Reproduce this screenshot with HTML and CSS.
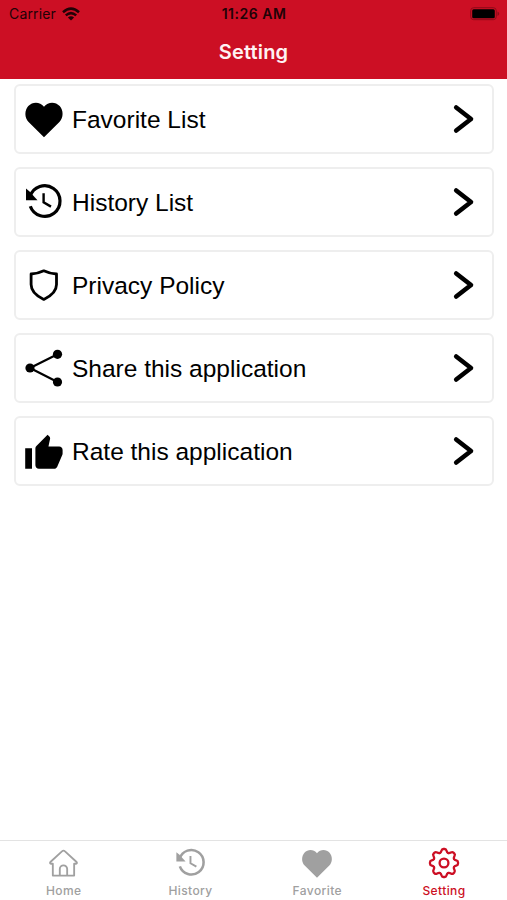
FILE: index.html
```html
<!DOCTYPE html>
<html lang="en">
<head>
<meta charset="utf-8">
<title>Setting</title>
<link rel="stylesheet" href="styles.css">
</head>
<body>
<svg class="defs" aria-hidden="true">
  <symbol id="heart" viewBox="0 0 40 40"><path fill="currentColor" d="M20 38.3L4.6 23.1C.4 18.700.4 11.500 4.300 7.100C8.600 2.500 15.800 2.500 20 7.800C24.200 2.500 31.400 2.500 35.700 7.100C39.600 11.500 39.600 18.700 35.400 23.100Z"/></symbol>
  <symbol id="history" viewBox="0 0 40 40">
    <path fill="none" stroke="currentColor" stroke-width="3.200" d="M6.100 14.500A15.300 15.300 0 1 1 6.300 24.200"/>
    <path fill="none" stroke="currentColor" stroke-width="2.400" d="M19.600 11.300V20.300L27 24.600"/>
    <path fill="currentColor" d="M2 6.600L5.500 9.500L13.500 18.200H2Z"/>
  </symbol>
  <symbol id="chevron" viewBox="0 0 24 32"><path fill="none" stroke="currentColor" stroke-width="4.600" stroke-linecap="round" stroke-linejoin="round" d="M5.200 4.500L20 16L5.200 27.500"/></symbol>
</svg>
<header class="header">
  <div class="status">
    <div class="carrier"><span>Carrier</span>
      <svg class="wifi" viewBox="0 0 18 14"><g fill="none" stroke="currentColor" stroke-width="2.500"><path d="M1 5.200Q9-2 17 5.200"/><path d="M3.800 8.400Q9 3.900 14.200 8.400"/></g><path fill="currentColor" d="M5.900 10.500Q9 7.900 12.100 10.500L9 13.600Z"/></svg>
    </div>
    <span class="time">11:26 AM</span>
    <svg class="battery" viewBox="0 0 30 14"><rect x=".7" y=".7" width="25.600" height="12" rx="3" fill="none" stroke="#8e0b19" stroke-width="1"/><rect x="2.200" y="2.200" width="22.600" height="9" rx="1.500" fill="#000"/><path fill="#8e0b19" d="M27.500 4.500Q31 6.700 27.500 9Z"/></svg>
  </div>
  <h1 class="title">Setting</h1>
</header>
<main class="list">
  <a class="row"><svg class="icon"><use href="#heart"/></svg><span class="label">Favorite List</span><svg class="chevron"><use href="#chevron"/></svg></a>
  <a class="row"><svg class="icon"><use href="#history"/></svg><span class="label">History List</span><svg class="chevron"><use href="#chevron"/></svg></a>
  <a class="row"><svg class="icon" viewBox="0 0 40 40"><path fill="none" stroke="#000" stroke-width="2.800" stroke-linejoin="round" d="M19.800 5.800Q26 8.800 32.500 9V19.500Q32.500 28.500 19.800 34.400Q7.100 28.500 7.100 19.500V9Q13.600 8.800 19.800 5.800Z"/></svg><span class="label">Privacy Policy</span><svg class="chevron"><use href="#chevron"/></svg></a>
  <a class="row"><svg class="icon" viewBox="0 0 40 40"><path fill="none" stroke="#000" stroke-width="2.200" d="M33.500 6.300L6 20L33.500 34"/><circle cx="33.500" cy="6.300" r="4.600"/><circle cx="6" cy="20" r="4.600"/><circle cx="33.500" cy="34" r="4.600"/></svg><span class="label">Share this application</span><svg class="chevron"><use href="#chevron"/></svg></a>
  <a class="row"><svg class="icon" viewBox="0 0 40 40"><path transform="translate(-.5 2) scale(1.7)" d="M1 21h4V9H1v12zm22-11c0-1.100-.9-2-2-2h-6.310l.95-4.570.03-.32c0-.41-.17-.79-.44-1.060L14.170 1 7.590 7.590C7.220 7.950 7 8.450 7 9v10c0 1.100.9 2 2 2h9c.83 0 1.540-.5 1.840-1.220l3.020-7.050c.09-.23.14-.47.14-.73v-2z"/></svg><span class="label">Rate this application</span><svg class="chevron"><use href="#chevron"/></svg></a>
</main>
<nav class="tabs">
  <a class="tab"><svg class="tab-icon" viewBox="-1 -.5 33 33"><g fill="none" stroke="currentColor" stroke-width="1.900" stroke-linejoin="round"><path d="M16 3.200Q16.700 3.200 17.300 3.800L29.500 15Q30.500 16.500 28.800 16.800H27V29H5V16.800H3.200Q1.500 16.500 2.500 15L14.700 3.800Q15.300 3.200 16 3.200Z"/><path d="M12.200 29V22.200A3.800 3.800 0 0 1 19.800 22.200V29"/></g></svg><span>Home</span></a>
  <a class="tab"><svg class="tab-icon" viewBox="-.8 0 32 32"><use href="#history" width="32" height="32"/></svg><span>History</span></a>
  <a class="tab"><svg class="tab-icon"><use href="#heart"/></svg><span>Favorite</span></a>
  <a class="tab active"><svg class="tab-icon" viewBox="-16 -16 32 32"><g fill="none" stroke="currentColor" stroke-width="2.300" stroke-linecap="round">
    <path id="tooth" d="M-4.130-9.980C-1.700-11-3.400-14-.7-14H.7C3.400-14 1.700-11 4.130-9.980"/>
    <use href="#tooth" transform="rotate(45)"/><use href="#tooth" transform="rotate(90)"/><use href="#tooth" transform="rotate(135)"/><use href="#tooth" transform="rotate(180)"/><use href="#tooth" transform="rotate(225)"/><use href="#tooth" transform="rotate(270)"/><use href="#tooth" transform="rotate(315)"/>
    <circle r="4.400"/></g></svg><span>Setting</span></a>
</nav>
</body>
</html>
```
FILE: styles.css
```css
* { box-sizing: border-box; }
body {
  margin: 0;
  height: 900px;
  display: flex;
  flex-direction: column;
  overflow: hidden;
  background: #fff;
  color: #000;
  font-family: Inter, sans-serif;
}
.defs { position: absolute; width: 0; height: 0; }
.header { height: 79px; background: #cc0f24; flex: none; }
.status {
  height: 27px;
  display: grid;
  grid-template-columns: 1fr auto 1fr;
  align-items: center;
  padding: 0 7px 0 9px;
  font-size: 14px;
  color: #210206;
}
.carrier { display: flex; align-items: center; gap: 6px; letter-spacing: .15px; }
.wifi { width: 18px; height: 14px; }
.time { font-weight: 600; letter-spacing: .5px; margin-left: -1px; }
.battery { width: 30px; height: 14px; justify-self: end; }
.title {
  margin: 0;
  height: 51px;
  line-height: 51px;
  text-align: center;
  font-size: 20px;
  font-weight: 600;
  letter-spacing: .15px;
  color: #fff2f3;
}
.list {
  flex: 1;
  display: flex;
  flex-direction: column;
  gap: 13px;
  padding: 5px 13px 0 14px;
}
.row {
  height: 70px;
  flex: none;
  display: flex;
  align-items: center;
  padding: 0 17px 0 8px;
  border: 2px solid #eee;
  border-radius: 6px;
}
.icon { width: 40px; height: 40px; flex: none; }
.label {
  flex: 1;
  margin-left: 8px;
  padding-top: 2px;
  font: 24.500px/30px "Liberation Sans", sans-serif;
  white-space: nowrap;
}
.chevron { width: 24px; height: 32px; }
.tabs {
  height: 60px;
  flex: none;
  display: grid;
  grid-template-columns: repeat(4, 1fr);
  border-top: 1px solid #e3e3e3;
}
.tab {
  display: flex;
  flex-direction: column;
  align-items: center;
  padding-top: 6px;
  color: #a0a0a0;
  font-size: 12px;
  line-height: 16px;
  font-weight: 500;
  letter-spacing: .4px;
}
.tab span { padding-left: .8px; }
.tab-icon { width: 32px; height: 32px; margin-bottom: 4px; }
.active { color: #cc0f24; }
```
